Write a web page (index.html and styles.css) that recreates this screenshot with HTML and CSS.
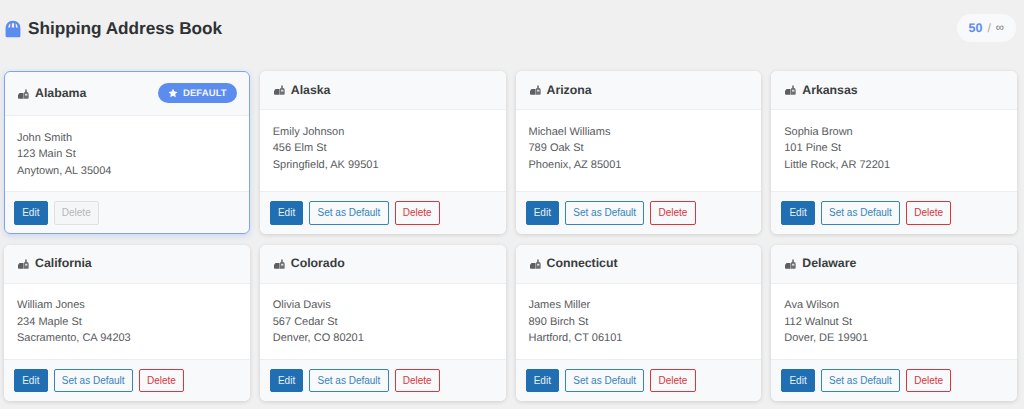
FILE: index.html
```html
<!DOCTYPE html>
<html lang="en">
<head>
    <meta charset="UTF-8">
    <meta name="viewport" content="width=device-width, initial-scale=1.0">
    <title>Shipping Address Book</title>
    <link rel="stylesheet" href="styles.css">
</head>
<body>
    <svg class="icon-defs" width="0" height="0">
        <symbol id="mailbox" viewBox="0 0 11 10">
            <path d="M0 6 L1.5 4 H5.5 V9.7 H1 Q0 9.7 0 8.7 Z" fill="#5c5f63"/>
            <path d="M5.8 4.4 Q6.2 3 7.2 2.8 V0.6 H8.8 V2.8 Q10.7 3.2 10.7 5 V8.7 Q10.7 9.7 9.7 9.7 H5.8 Z" fill="#6d7074"/>
            <rect x="7" y="4.8" width="2.4" height="1.8" fill="#d8d8d8"/>
        </symbol>
    </svg>

    <header class="top-bar">
        <h1 class="page-title">
            <svg class="title-icon" viewBox="0 0 16 18">
                <path d="M0.6 8 Q1 1 8 0.8 Q15 1 15.4 8 V16 Q15.4 17.2 14 17.2 H2 Q0.6 17.2 0.6 16 Z" fill="#5b8def"/>
                <path d="M3.2 7.6 Q3.6 4 5.4 3.4 L5 7.6 Z M6.8 7.6 L7 3.2 H9 L9.2 7.6 Z M10.6 3.4 Q12.4 4 12.8 7.6 H11 Z" fill="#f0f0f0"/>
            </svg>
            Shipping Address Book
        </h1>
        <div class="counter"><span class="count">50</span><span class="slash">/</span><span class="limit">∞</span></div>
    </header>

    <main class="card-grid">
        <article class="card card-default">
            <div class="card-head card-head-default">
                <h2 class="card-title"><svg class="mail-icon"><use href="#mailbox"/></svg>Alabama</h2>
                <span class="badge">
                    <svg class="star" viewBox="0 0 24 24"><path d="M12 1.5 15.3 8.4 22.8 9.3 17.3 14.5 18.7 22 12 18.3 5.3 22 6.7 14.5 1.2 9.3 8.7 8.4Z" fill="#fff"/></svg>
                    DEFAULT
                </span>
            </div>
            <div class="card-body">John Smith<br>123 Main St<br>Anytown, AL 35004</div>
            <div class="card-foot">
                <button class="btn btn-edit">Edit</button>
                <button class="btn btn-disabled">Delete</button>
            </div>
        </article>

        <article class="card">
            <div class="card-head">
                <h2 class="card-title"><svg class="mail-icon"><use href="#mailbox"/></svg>Alaska</h2>
            </div>
            <div class="card-body">Emily Johnson<br>456 Elm St<br>Springfield, AK 99501</div>
            <div class="card-foot">
                <button class="btn btn-edit">Edit</button>
                <button class="btn btn-default">Set as Default</button>
                <button class="btn btn-delete">Delete</button>
            </div>
        </article>

        <article class="card">
            <div class="card-head">
                <h2 class="card-title"><svg class="mail-icon"><use href="#mailbox"/></svg>Arizona</h2>
            </div>
            <div class="card-body">Michael Williams<br>789 Oak St<br>Phoenix, AZ 85001</div>
            <div class="card-foot">
                <button class="btn btn-edit">Edit</button>
                <button class="btn btn-default">Set as Default</button>
                <button class="btn btn-delete">Delete</button>
            </div>
        </article>

        <article class="card">
            <div class="card-head">
                <h2 class="card-title"><svg class="mail-icon"><use href="#mailbox"/></svg>Arkansas</h2>
            </div>
            <div class="card-body">Sophia Brown<br>101 Pine St<br>Little Rock, AR 72201</div>
            <div class="card-foot">
                <button class="btn btn-edit">Edit</button>
                <button class="btn btn-default">Set as Default</button>
                <button class="btn btn-delete">Delete</button>
            </div>
        </article>

        <article class="card">
            <div class="card-head">
                <h2 class="card-title"><svg class="mail-icon"><use href="#mailbox"/></svg>California</h2>
            </div>
            <div class="card-body">William Jones<br>234 Maple St<br>Sacramento, CA 94203</div>
            <div class="card-foot">
                <button class="btn btn-edit">Edit</button>
                <button class="btn btn-default">Set as Default</button>
                <button class="btn btn-delete">Delete</button>
            </div>
        </article>

        <article class="card">
            <div class="card-head">
                <h2 class="card-title"><svg class="mail-icon"><use href="#mailbox"/></svg>Colorado</h2>
            </div>
            <div class="card-body">Olivia Davis<br>567 Cedar St<br>Denver, CO 80201</div>
            <div class="card-foot">
                <button class="btn btn-edit">Edit</button>
                <button class="btn btn-default">Set as Default</button>
                <button class="btn btn-delete">Delete</button>
            </div>
        </article>

        <article class="card">
            <div class="card-head">
                <h2 class="card-title"><svg class="mail-icon"><use href="#mailbox"/></svg>Connecticut</h2>
            </div>
            <div class="card-body">James Miller<br>890 Birch St<br>Hartford, CT 06101</div>
            <div class="card-foot">
                <button class="btn btn-edit">Edit</button>
                <button class="btn btn-default">Set as Default</button>
                <button class="btn btn-delete">Delete</button>
            </div>
        </article>

        <article class="card">
            <div class="card-head">
                <h2 class="card-title"><svg class="mail-icon"><use href="#mailbox"/></svg>Delaware</h2>
            </div>
            <div class="card-body">Ava Wilson<br>112 Walnut St<br>Dover, DE 19901</div>
            <div class="card-foot">
                <button class="btn btn-edit">Edit</button>
                <button class="btn btn-default">Set as Default</button>
                <button class="btn btn-delete">Delete</button>
            </div>
        </article>
    </main>
</body>
</html>
```

FILE: styles.css
```css
body {
    margin: 0;
    padding: 14px 7px 8px 4px;
    background: #f0f0f0;
    color: #333;
    font-family: "Liberation Sans", Arial, sans-serif;
    text-rendering: geometricPrecision;
    overflow: hidden;
}
.icon-defs {
    display: block;
    height: 0;
}
.top-bar {
    display: flex;
    justify-content: space-between;
    align-items: center;
    height: 28px;
    margin-bottom: 29px;
}
.page-title {
    display: flex;
    align-items: center;
    gap: 7px;
    margin: 0 0 0 1px;
    font-size: 17.2px;
    font-weight: 700;
    color: #2f3235;
}
.title-icon {
    width: 16px;
    height: 18px;
    margin-top: 2px;
}
.counter {
    display: flex;
    align-items: center;
    gap: 5px;
    margin-right: 1px;
    padding: 0 12px;
    height: 28px;
    border-radius: 14px;
    background: #f8f9fa;
    font-size: 12px;
}
.count {
    color: #5b8def;
    font-weight: 700;
    font-size: 12.5px;
}
.slash {
    color: #aaa;
}
.limit {
    color: #777;
    font-size: 11.5px;
}
.card-grid {
    display: grid;
    grid-template-columns: repeat(4, 1fr);
    gap: 11px 10px;
}
.card {
    display: flex;
    flex-direction: column;
    background: #fff;
    border-radius: 6px;
    box-shadow: 0 1px 4px rgba(0, 0, 0, 0.14);
    overflow: hidden;
}
.card-default {
    outline: 1px solid #7ea4ee;
    outline-offset: -1px;
    box-shadow: 0 2px 6px rgba(91, 141, 239, 0.25);
}
.card-head {
    display: flex;
    justify-content: space-between;
    align-items: center;
    padding: 11.5px 13px 11px;
    background: #f8f9fa;
    border-bottom: 1px solid #eceef0;
}
.card-head-default {
    padding: 12px 13px 12px 14px;
}
.card-title {
    display: flex;
    align-items: center;
    margin: 0;
    font-size: 12.3px;
    line-height: 15.5px;
    font-weight: 700;
    color: #3a3d40;
}
.card-head-default .card-title {
    margin: 1px 0 0 -1px;
}
.mail-icon {
    width: 11px;
    height: 10px;
    margin: 0 6px 0 1px;
}
.badge {
    display: flex;
    align-items: center;
    gap: 5px;
    height: 20px;
    padding: 0 10px;
    border-radius: 10px;
    background: #5b8def;
    color: #f4f7fe;
    font-size: 9.5px;
    font-weight: 700;
    letter-spacing: 0.1px;
}
.star {
    width: 10px;
    height: 10px;
}
.card-body {
    flex: 1;
    padding: 13.5px 13px 12px;
    font-size: 11px;
    line-height: 16.5px;
    color: #585b5e;
}
.card-foot {
    display: flex;
    gap: 6px;
    padding: 9px 10px;
    background: #f8f9fa;
    border-top: 1px solid #eceef0;
}
.btn {
    height: 23.5px;
    padding: 0 7.2px;
    border: 1px solid;
    border-radius: 2px;
    background: transparent;
    font-family: inherit;
    font-size: 10px;
}
.btn-edit {
    background: #1f6fb2;
    border-color: #1f6fb2;
    color: #e8f1f8;
}
.btn-default {
    border-color: #3583bf;
    color: #3583bf;
}
.btn-delete {
    border-color: #d9363e;
    color: #d9363e;
}
.btn-disabled {
    border-color: #dfe1e3;
    background: #f5f6f7;
    color: #b5b7b9;
}
```
